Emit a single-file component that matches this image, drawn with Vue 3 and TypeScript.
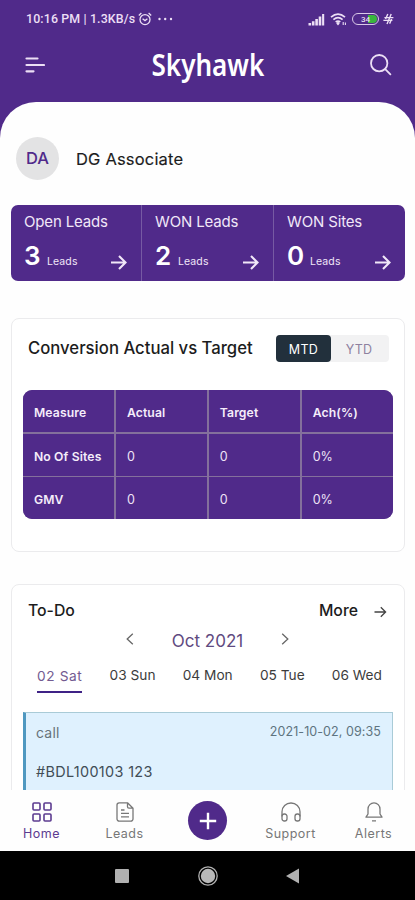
<script setup lang="ts">
interface Stat { label: string; value: number; unit: string }
interface Day { label: string; active?: boolean }

const stats: Stat[] = [
  { label: 'Open Leads', value: 3, unit: 'Leads' },
  { label: 'WON Leads', value: 2, unit: 'Leads' },
  { label: 'WON Sites', value: 0, unit: 'Leads' },
]
const columns: string[] = ['Measure', 'Actual', 'Target', 'Ach(%)']
const rows: string[][] = [
  ['No Of Sites', '0', '0', '0%'],
  ['GMV', '0', '0', '0%'],
]
const days: Day[] = [
  { label: '02 Sat', active: true },
  { label: '03 Sun' },
  { label: '04 Mon' },
  { label: '05 Tue' },
  { label: '06 Wed' },
]
</script>

<template>
  <div class="phone">
    <header class="top">
      <div class="status">
        <span class="clock">10:16 PM | 1.3KB/s</span>
        <svg class="alarm" width="14" height="14" viewBox="0 0 14 14" fill="none" stroke="currentColor" stroke-width="1.3">
          <circle cx="7" cy="7.6" r="5" />
          <path d="M4.6 6.8L7 8.6l2.4-1.8M.8 3.4L3.4 1M13.2 3.4L10.6 1" />
        </svg>
        <svg class="dots" width="15" height="4" viewBox="0 0 15 4" fill="currentColor">
          <circle cx="1.5" cy="2" r="1.2" /><circle cx="7.2" cy="2" r="1.2" /><circle cx="13" cy="2" r="1.2" />
        </svg>
        <div class="indicators">
          <svg width="17" height="13" viewBox="0 0 17 13" fill="currentColor">
            <path d="M.5 10h2.6v2.5H.5zM3.9 8.2h2.6v4.3H3.9zM7.3 6h2.6v6.5H7.3zM10.7 3.6h2.6v8.9h-2.6zM14.1 1h2.1v11.5h-2.1z" />
          </svg>
          <svg class="wifi" width="17" height="14" viewBox="0 0 17 14" fill="none" stroke="currentColor" stroke-width="1.7">
            <path d="M1 5.2Q8 -1 15 5.2M3.4 7.7Q8 3.6 12.6 7.7M5.7 10Q8 8.2 10.3 10" />
            <path d="M8 10.2l1 1.2-1 1.2-1-1.2zM13.2 10v3M15.4 10.5v2.5" stroke-width="1.1" />
          </svg>
          <span class="battery"><span class="charge">34</span></span>
          <svg class="bolt" width="11" height="12" viewBox="0 0 11 12" fill="none" stroke="currentColor" stroke-width="1.4">
            <path d="M4.8 1L2.6 6M8.2 1L4 11M8.6 6L6.6 10.6M1.4 4.6h9M.4 7.4h9" />
          </svg>
        </div>
      </div>
      <div class="appbar">
        <svg class="menu" width="20" height="18" viewBox="0 0 20 18" stroke="currentColor" stroke-width="2.2" stroke-linecap="round">
          <path d="M1.5 2.5h11M1.5 9h17.5M1.5 15.3h7" />
        </svg>
        <h1 class="brand">Skyhawk</h1>
        <svg class="search" width="22" height="22" viewBox="0 0 22 22" fill="none" stroke="currentColor" stroke-width="1.8" stroke-linecap="round">
          <circle cx="9.2" cy="9.2" r="8.2" /><path d="M15.2 15.2l5.2 5.2" />
        </svg>
      </div>
    </header>

    <main class="sheet">
      <section class="profile">
        <span class="avatar">DA</span>
        <span class="name">DG Associate</span>
      </section>

      <section class="stats">
        <div v-for="s in stats" :key="s.label" class="stat">
          <div class="stat-label">{{ s.label }}</div>
          <div class="stat-row">
            <span class="stat-value">{{ s.value }}</span>
            <span class="stat-unit">{{ s.unit }}</span>
            <svg class="stat-arrow" width="16" height="15" viewBox="0 0 16 15" fill="none" stroke="currentColor" stroke-width="2.1">
              <path d="M0 7.5h14.3M8 1l6.5 6.5L8 14" />
            </svg>
          </div>
        </div>
      </section>

      <section class="card conversion">
        <div class="card-head">
          <h2 class="title">Conversion Actual vs Target</h2>
          <div class="toggle">
            <span class="option selected">MTD</span>
            <span class="option">YTD</span>
          </div>
        </div>
        <div class="grid">
          <div v-for="c in columns" :key="c" class="cell strong">{{ c }}</div>
          <template v-for="r in rows" :key="r[0]">
            <div v-for="(v, i) in r" :key="i" class="cell" :class="{ strong: i === 0 }">{{ v }}</div>
          </template>
        </div>
      </section>

      <section class="card todo">
        <div class="todo-head">
          <h2 class="todo-title">To-Do</h2>
          <span class="more">More</span>
          <svg class="more-arrow" width="13" height="12" viewBox="0 0 13 12" fill="none" stroke="#444" stroke-width="1.3">
            <path d="M.5 6h11M6.8 1.2L11.6 6l-4.8 4.8" />
          </svg>
        </div>
        <div class="month">
          <svg width="8" height="12" viewBox="0 0 8 12" fill="none" stroke="#666" stroke-width="1.3"><path d="M6.8 .8L1.2 6l5.6 5.2" /></svg>
          <span class="month-name">Oct 2021</span>
          <svg width="8" height="12" viewBox="0 0 8 12" fill="none" stroke="#666" stroke-width="1.3"><path d="M1.2 .8L6.8 6l-5.6 5.2" /></svg>
        </div>
        <div class="days">
          <span v-for="d in days" :key="d.label" class="day" :class="{ active: d.active }">{{ d.label }}</span>
        </div>
        <article class="task">
          <div class="task-head">
            <span class="kind">call</span>
            <time class="when">2021-10-02, 09:35</time>
          </div>
          <div class="task-ref">#BDL100103 123</div>
        </article>
      </section>
    </main>

    <nav class="tabs">
      <div class="tab current">
        <svg width="20" height="20" viewBox="0 0 20 20" fill="none" stroke="currentColor" stroke-width="1.6">
          <rect x="1" y="1" width="7" height="7" rx="1" /><rect x="12" y="1" width="7" height="7" rx="1" />
          <rect x="1" y="12" width="7" height="7" rx="1" /><rect x="12" y="12" width="7" height="7" rx="1" />
        </svg>
        <span>Home</span>
      </div>
      <div class="tab">
        <svg width="20" height="20" viewBox="0 0 20 20" fill="none" stroke="currentColor" stroke-width="1.3" stroke-linejoin="round">
          <path d="M12.5 .8H4.2A2.2 2.2 0 0 0 2 3v14a2.2 2.2 0 0 0 2.2 2.2h11.6A2.2 2.2 0 0 0 18 17V6.2zM12.5 .8v4a1.4 1.4 0 0 0 1.4 1.4H18M6 8h3.5M6 11.3h8M6 14.8h8" />
        </svg>
        <span>Leads</span>
      </div>
      <div class="tab">
        <span class="add">
          <svg width="18" height="18" viewBox="0 0 18 18" stroke="#fff" stroke-width="2.4"><path d="M9 .8v16.4M.8 9h16.4" /></svg>
        </span>
      </div>
      <div class="tab">
        <svg width="20" height="20" viewBox="0 0 20 20" fill="none" stroke="currentColor" stroke-width="1.3">
          <path d="M1 14.5V9.8a9 8.8 0 0 1 18 0v4.7" />
          <rect x="1" y="12" width="5" height="7" rx="2.3" /><rect x="14" y="12" width="5" height="7" rx="2.3" />
        </svg>
        <span>Support</span>
      </div>
      <div class="tab">
        <svg width="20" height="20" viewBox="0 0 20 20" fill="none" stroke="currentColor" stroke-width="1.3" stroke-linejoin="round">
          <path d="M4 12V7.2a6 6.4 0 0 1 12 0V12l2 3.2H2zM8 18.8h4" />
        </svg>
        <span>Alerts</span>
      </div>
    </nav>

    <footer class="system">
      <svg width="14" height="14" viewBox="0 0 14 14"><rect width="14" height="14" rx="1" fill="#b1b1b1" /></svg>
      <svg width="20" height="20" viewBox="0 0 20 20"><circle cx="10" cy="10" r="9.2" fill="none" stroke="#b1b1b1" stroke-width="1.3" /><circle cx="10" cy="10" r="7.2" fill="#b8b8b8" /></svg>
      <svg width="13" height="16" viewBox="0 0 13 16"><path d="M13 .5v15L0 8z" fill="#b1b1b1" /></svg>
    </footer>
  </div>
</template>

<style>
body { background: #fff; }
</style>

<style scoped>
* { box-sizing: border-box; }
.phone {
  width: 415px;
  height: 900px;
  display: flex;
  flex-direction: column;
  overflow: hidden;
  background: #502a8a;
  font-family: Inter, "Liberation Sans", sans-serif;
  color: #1c1c1c;
  white-space: nowrap;
}
h1, h2 { margin: 0; }
.top { height: 102px; flex: none; color: #ecdff5; }
.status {
  height: 38px;
  display: flex;
  align-items: center;
  padding: 0 21px 0 26px;
}
.clock { width: 110px; font: 500 12.4px/14px Roboto, sans-serif; letter-spacing: .13px; }
.alarm { margin-left: 2px; }
.dots { margin-left: 6px; }
.indicators { margin-left: auto; display: flex; align-items: center; }
.wifi { margin-left: 5px; }
.battery {
  width: 27px;
  height: 12px;
  margin-left: 5px;
  padding: 1px;
  border: 1.5px solid #d9c9e8;
  border-radius: 6px;
}
.charge {
  display: block;
  height: 8px;
  border-radius: 4px;
  background: linear-gradient(90deg, #502a8a 62%, #38b53e 62%);
  color: #e9dff2;
  font: 500 8px/9px Roboto, sans-serif;
  text-align: center;
}
.bolt { margin-left: 4px; }
.appbar {
  height: 54px;
  display: grid;
  grid-template-columns: 60px 1fr 60px;
  align-items: center;
  padding: 0 23px 0 25px;
}
.brand {
  justify-self: center;
  color: #fff;
  font: 600 30px/40px "Noto Sans", sans-serif;
  transform: translateX(-1px) scaleX(.87);
}
.search { justify-self: end; }
.sheet {
  flex: 1;
  min-height: 0;
  overflow: hidden;
  padding: 0 10px 0 11px;
  border-radius: 36px 36px 0 0;
  background: #fefefe;
}
.profile { display: flex; align-items: center; height: 103px; padding: 10px 0 0 5px; }
.avatar {
  width: 43px;
  height: 43px;
  margin-right: 17px;
  border-radius: 50%;
  background: #e3e3e4;
  color: #502a8a;
  font-size: 16.5px;
  font-weight: 500;
  line-height: 42px;
  text-align: center;
}
.name { font-size: 16.5px; letter-spacing: .18px; -webkit-text-stroke: .15px; }
.stats {
  display: grid;
  grid-template-columns: 131px 132px 131px;
  height: 76px;
  overflow: hidden;
  border-radius: 7px;
  background: #502a8a;
  color: #f1e7f8;
}
.stat { padding: 8px 14px 0 13px; border-right: 1px solid #765aa3; }
.stat:last-child { border-right: 0; }
.stat-label { font-size: 15px; line-height: 18px; letter-spacing: -.15px; }
.stat-row { display: flex; align-items: baseline; line-height: 32px; margin-top: 9px; }
.stat-value { width: 23px; color: #fff; font-size: 26px; font-weight: 600; line-height: 32px; }
.stat-unit { font-size: 10.5px; letter-spacing: .1px; }
.stat-arrow { margin: 0 0 0 auto; align-self: center; transform: translateY(3px); }
.card { border: 1px solid #ebebed; border-radius: 8px; background: #fff; }
.conversion { height: 234px; margin-top: 37px; padding: 16px 11px 0; }
.card-head { display: flex; align-items: center; height: 27px; padding: 0 4px 0 5px; }
.title { font-size: 16.7px; font-weight: 450; line-height: 20px; padding-bottom: 2px; }
.toggle {
  display: flex;
  width: 113px;
  height: 27px;
  margin-left: auto;
  border-radius: 4px;
  background: #f2f2f3;
}
.option { flex: 1; padding-right: 2px; color: #8e819f; font-size: 12.5px; line-height: 29px; text-align: center; letter-spacing: .3px; }
.selected { flex: 0 0 55px; padding-right: 0; border-radius: 4px; background: #22303c; color: #fff; }
.grid {
  display: grid;
  grid-template-columns: repeat(4, 1fr);
  grid-template-rows: 42px 42px 42px;
  gap: 1.5px;
  width: 370px;
  height: 129px;
  margin-top: 28px;
  overflow: hidden;
  border-radius: 9px;
  background: #84709c;
}
.cell { background: #502a8a; padding: 0 0 0 11px; color: #eee3f6; font-size: 12.5px; line-height: 45px; }
.strong { font-weight: 600; font-size: 12.2px; letter-spacing: .12px; color: #f5edfa; }
.todo { height: 300px; margin-top: 32px; padding: 15px 11px 0; }
.todo-head { display: flex; align-items: center; height: 22px; padding: 0 6px 0 5px; }
.todo-title, .more { font-size: 15.8px; font-weight: 450; line-height: 20px; }
.more { margin: 0 16px 0 auto; }
.more-arrow { margin-top: 2px; }
.month { display: flex; align-items: center; justify-content: space-between; width: 163px; height: 22px; margin: 6px 0 0 103px; }
.month-name { font-size: 17px; color: #5f4a80; line-height: 20px; padding-top: 3px; }
.days { display: flex; justify-content: space-between; padding: 0 11px 0 14px; margin-top: 15px; }
.day { height: 28px; font-size: 13.7px; line-height: 21px; color: #3c3c3c; }
.active { color: #735b91; border-bottom: 2px solid #3f2286; line-height: 23px; letter-spacing: .6px; }
.task {
  width: 370px;
  height: 130px;
  margin-top: 19px;
  padding: 11px 11px 0 10px;
  border: 1px solid #a9cbd7;
  border-left: 3px solid #4f98c0;
  background: #dff1fe;
}
.task-head { display: flex; justify-content: space-between; line-height: 18px; }
.kind { font-size: 14px; color: #68737a; letter-spacing: .2px; }
.when { font-size: 12.5px; line-height: 16px; color: #5e7480; letter-spacing: .08px; }
.task-ref { margin-top: 20px; font-size: 14.4px; line-height: 20px; color: #414d56; letter-spacing: .35px; }
.tabs {
  flex: none;
  display: grid;
  grid-template-columns: repeat(5, 83px);
  height: 61px;
  background: #fefefe;
}
.tab {
  display: flex;
  flex-direction: column;
  align-items: center;
  padding-top: 12px;
  gap: 3px;
  color: #777;
  font-size: 12.5px;
  line-height: 17px;
  letter-spacing: .5px;
}
.current { color: #5c3b90; }
.add {
  display: flex;
  align-items: center;
  justify-content: center;
  width: 39px;
  height: 39px;
  margin-top: -1px;
  border-radius: 50%;
  background: #502a8a;
}
.system {
  flex: none;
  display: flex;
  align-items: center;
  justify-content: space-between;
  height: 49px;
  padding: 0 116px 0 115px;
  background: #000;
}
</style>
